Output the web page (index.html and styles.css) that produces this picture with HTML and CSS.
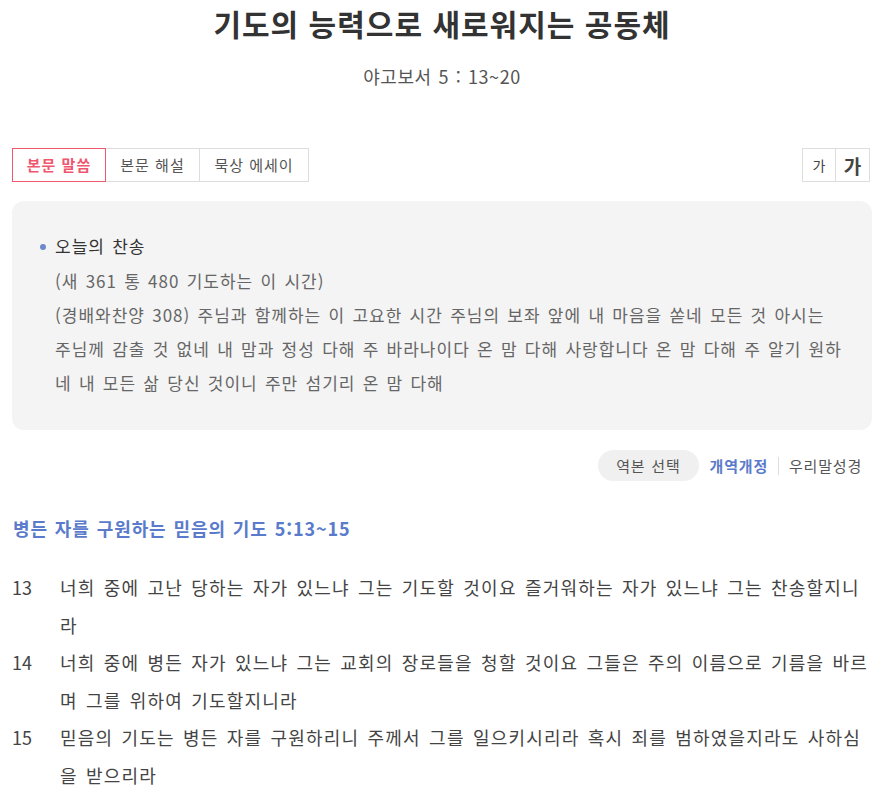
FILE: index.html
```html
<!DOCTYPE html>
<html lang="ko">
<head>
  <meta charset="UTF-8" />
  <meta name="viewport" content="width=device-width, initial-scale=1.0" />
  <title>기도의 능력으로 새로워지는 공동체</title>
  <link rel="stylesheet" href="styles.css">
</head>
<body>
  <header class="head">
    <h1 class="title">기도의 능력으로 새로워지는 공동체</h1>
    <p class="ref">야고보서 5 : 13~20</p>
  </header>

  <div class="toolbar">
    <div class="tabs">
      <a class="tab active">본문 말씀</a>
      <a class="tab">본문 해설</a>
      <a class="tab wide">묵상 에세이</a>
    </div>
    <div class="sizes">
      <button class="size small">가</button>
      <button class="size big">가</button>
    </div>
  </div>

  <div class="hymn">
    <p class="hymn-title">오늘의 찬송</p>
    <p class="hymn-text">(새 361 통 480 기도하는 이 시간)<br>(경배와찬양 308) 주님과 함께하는 이 고요한 시간 주님의 보좌 앞에 내 마음을 쏟네 모든 것 아시는 주님께 감출 것 없네 내 맘과 정성 다해 주 바라나이다 온 맘 다해 사랑합니다 온 맘 다해 주 알기 원하네 내 모든 삶 당신 것이니 주만 섬기리 온 맘 다해</p>
  </div>

  <div class="versions">
    <span class="pick">역본 선택</span>
    <a class="ver on">개역개정</a>
    <span class="bar"></span>
    <a class="ver">우리말성경</a>
  </div>

  <h2 class="section">병든 자를 구원하는 믿음의 기도 5:13~15</h2>

  <ol class="verses">
    <li><span class="num">13</span><span class="txt">너희 중에 고난 당하는 자가 있느냐 그는 기도할 것이요 즐거워하는 자가 있느냐 그는 찬송할지니라</span></li>
    <li><span class="num">14</span><span class="txt">너희 중에 병든 자가 있느냐 그는 교회의 장로들을 청할 것이요 그들은 주의 이름으로 기름을 바르며 그를 위하여 기도할지니라</span></li>
    <li><span class="num">15</span><span class="txt">믿음의 기도는 병든 자를 구원하리니 주께서 그를 일으키시리라 혹시 죄를 범하였을지라도 사하심을 받으리라</span></li>
  </ol>
</body>
</html>
```

FILE: styles.css
```css
body {
  margin: 0;
  padding: 0 12px;
  font-family: "Noto Sans CJK KR", "Noto Sans", sans-serif;
  color: #333;
  background: #fff;
}

.head {
  text-align: center;
  padding-top: 1px;
}

.title {
  margin: 0;
  font-size: 30px;
  font-weight: 700;
  line-height: 44px;
  letter-spacing: 1px;
  color: #333;
}

.ref {
  margin: 18px 0 0;
  font-size: 18px;
  line-height: 26px;
  letter-spacing: 0.6px;
  word-spacing: 1px;
  color: #555;
}

.toolbar {
  display: flex;
  justify-content: space-between;
  margin-top: 59px;
}

.tabs {
  display: flex;
}

.tab {
  display: block;
  width: 94px;
  height: 34px;
  line-height: 32px;
  box-sizing: border-box;
  text-align: center;
  border: 1px solid #ddd;
  border-left: none;
  font-size: 15px;
  letter-spacing: 1px;
  color: #555;
}

.tab.wide {
  width: 109px;
}

.tab.active {
  border: 1px solid #f0566e;
  color: #f0566e;
  font-weight: 700;
}

.sizes {
  display: flex;
  margin-right: 2px;
}

.size {
  width: 34px;
  height: 34px;
  padding: 0;
  border: 1px solid #ddd;
  background: #fff;
  font-family: inherit;
  color: #444;
}

.size + .size {
  border-left: none;
}

.size.small { font-size: 14px; }
.size.big { font-size: 19px; font-weight: 700; }

.hymn {
  margin-top: 19px;
  background: #f4f4f4;
  border-radius: 12px;
  padding: 30px 28px 30px 43px;
}

.hymn-title {
  position: relative;
  margin: 0;
  font-size: 17px;
  line-height: 30px;
  letter-spacing: 1px;
  word-spacing: 1.5px;
  color: #333;
}

.hymn-title::before {
  content: "";
  position: absolute;
  left: -15px;
  top: 13px;
  width: 6px;
  height: 6px;
  border-radius: 50%;
  background: #6d88cd;
}

.hymn-text {
  margin: 3px 0 0;
  font-size: 17px;
  line-height: 34px;
  letter-spacing: 1px;
  word-spacing: 1.5px;
  color: #666;
}

.versions {
  display: flex;
  justify-content: flex-end;
  align-items: center;
  margin-top: 20px;
  margin-right: 10px;
  font-size: 15px;
  letter-spacing: 0.8px;
}

.pick {
  background: #f0f0f0;
  border-radius: 16px;
  padding: 0 18px;
  height: 31px;
  line-height: 31px;
  word-spacing: 1px;
  color: #555;
  margin-right: 11px;
}

.ver {
  color: #555;
}

.ver.on {
  color: #5a7bcb;
  font-weight: 700;
}

.bar {
  width: 1px;
  height: 18px;
  background: #ddd;
  margin: 0 10px;
}

.section {
  margin: 34px 0 0 1px;
  font-size: 18px;
  font-weight: 700;
  letter-spacing: 0.9px;
  word-spacing: 1px;
  color: #5a7bcb;
}

.verses {
  list-style: none;
  margin: 28px 0 0;
  padding: 0;
  font-size: 18px;
  line-height: 37.5px;
  letter-spacing: 1.2px;
  word-spacing: 2px;
  color: #444;
}

.verses li {
  display: flex;
}

.num {
  flex: 0 0 48px;
  letter-spacing: 0;
}
```
